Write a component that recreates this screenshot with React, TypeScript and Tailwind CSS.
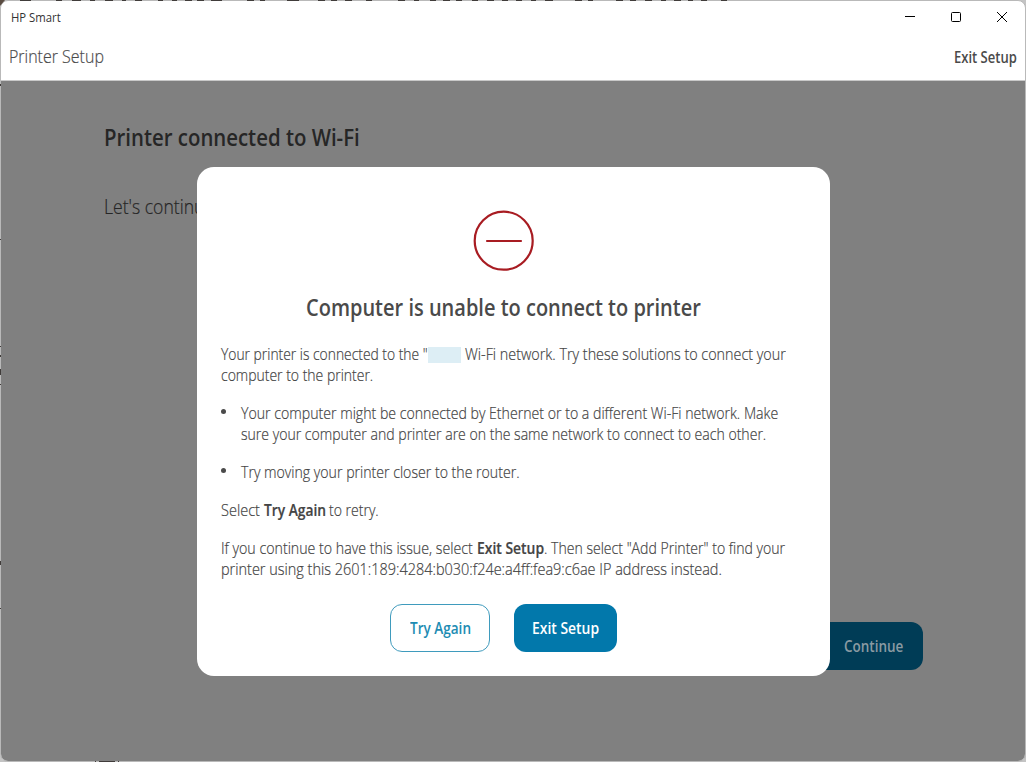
import { ReactNode, useLayoutEffect, useRef, useState } from 'react';

/** Keeps a run of text on one line and condenses it to the width of its box. */
function Fit({ className, children }: { className: string; children: ReactNode }) {
  const box = useRef<HTMLSpanElement>(null);
  const run = useRef<HTMLSpanElement>(null);
  const [scale, setScale] = useState(1);
  useLayoutEffect(() => {
    if (box.current && run.current) {
      setScale(box.current.offsetWidth / run.current.offsetWidth);
    }
  }, []);
  return (
    <span ref={box} className={`block shrink-0 whitespace-nowrap ${className}`}>
      <span ref={run} className="inline-block origin-left" style={{ transform: `scaleX(${scale})` }}>
        {children}
      </span>
    </span>
  );
}

function TitleBar() {
  return (
    <div className="flex h-8 items-center justify-between pl-[10px] text-[#333]">
      <Fit className="mt-px w-[50px] text-[12px] font-normal leading-4">HP Smart</Fit>
      <div className="flex text-black">
        <svg width="46" height="32" fill="none" stroke="currentColor">
          <path d="M18 15.5h10" />
        </svg>
        <svg width="46" height="32" fill="none" stroke="currentColor">
          <rect x="18.5" y="11.5" width="9" height="9" rx="1" />
        </svg>
        <svg width="46" height="32" fill="none" stroke="currentColor">
          <path d="M18 11l10 10M28 11L18 21" />
        </svg>
      </div>
    </div>
  );
}

/** Slivers of the document behind the window, seen along its edges. */
function Backdrop() {
  return (
    <svg className="pointer-events-none absolute inset-0" width="1026" height="762" fill="none" stroke="#403c3a">
      <path d="M0 0h5L0 6z" fill="#5a4c42" stroke="none" />
      <path d="M20 .5h11M56 .5h6M72 .5h9M90 .5h5M105 .5h8M122 .5h4M135 .5h7M158 .5h5M172 .5h5M185 .5h7M197 .5h7M211 .5h11M247 .5h7M260 .5h5M287 .5h12M318 .5h7M331 .5h6M345 .5h7M366 .5h6M398 .5h7M414 .5h5M430 .5h6M443 .5h7M456 .5h6M472 .5h6M487 .5h7M502 .5h6M516 .5h6M531 .5h5M545 .5h8M575 .5h7M588 .5h5M616 .5h7M630 .5h6M645 .5h7M661 .5h5M674 .5h7M688 .5h5M701 .5h6M721 .5h6" />
      <path d="M.5 239v1M.5 346v1M.5 355v2M.5 369v6M.5 384v1M.5 561v4M.5 608v1M.5 84v2M95 761.5h1M99 761.5h16M118 761.5h1" />
    </svg>
  );
}

function Dialog() {
  return (
    <section className="absolute left-[196px] top-[86px] flex h-[509px] w-[633px] flex-col rounded-[17px] bg-white px-6 pt-[43px] text-[16px] leading-[21px] text-[#444]">
      <svg className="ml-[252px] shrink-0" width="62" height="62" fill="none" stroke="#a81c22" strokeWidth="2.2">
        <circle cx="30.7" cy="30.7" r="29" />
        <path d="M14 31h34" strokeWidth="2.2" strokeLinecap="round" />
      </svg>
      <h2 className="ml-[85px] mt-[19px] text-[24px] font-semibold leading-8 text-[#4a4a4a]">
        <Fit className="w-[395px]">Computer is unable to connect to printer</Fit>
      </h2>
      <div className="mt-[21px] [-webkit-text-stroke:0.2px]">
        <div className="flex">
          <Fit className="w-[207px]">Your printer is connected to the "</Fit>
          <span className="mt-[3px] h-4 w-[33px] bg-[#ddeef5]" />
          <Fit className="ml-1 w-[321px]">Wi-Fi network. Try these solutions to connect your</Fit>
        </div>
        <Fit className="w-[152px]">computer to the printer.</Fit>
      </div>
      <ul className="mt-[17px] flex flex-col gap-[17px] [-webkit-text-stroke:0.2px]">
        <li className="flex">
          <span className="mr-[15px] mt-[6px] size-[5px] rounded-full bg-[#4a4a4a]" />
          <div>
            <Fit className="w-[537px]">Your computer might be connected by Ethernet or to a different Wi-Fi network. Make</Fit>
            <Fit className="w-[525px]">sure your computer and printer are on the same network to connect to each other.</Fit>
          </div>
        </li>
        <li className="flex">
          <span className="mr-[15px] mt-[6px] size-[5px] rounded-full bg-[#4a4a4a]" />
          <Fit className="w-[279px]">Try moving your printer closer to the router.</Fit>
        </li>
      </ul>
      <div className="mt-[17px] flex [-webkit-text-stroke:0.2px]">
        <Fit className="w-[39px]">Select</Fit>
        <Fit className="ml-1 w-[62px] font-semibold">Try Again</Fit>
        <Fit className="ml-[3px] w-[50px]">to retry.</Fit>
      </div>
      <div className="mt-[17px] [-webkit-text-stroke:0.2px]">
        <div className="flex">
          <Fit className="w-[252px]">If you continue to have this issue, select</Fit>
          <Fit className="ml-1 w-[67px] font-semibold">Exit Setup</Fit>
          <Fit className="w-[241px]">. Then select "Add Printer" to find your</Fit>
        </div>
        <Fit className="w-[501px]">printer using this 2601:189:4284:b030:f24e:a4ff:fea9:c6ae IP address instead.</Fit>
      </div>
      <div className="ml-[169px] mt-6 flex gap-6 font-semibold">
        <button className="flex h-12 w-[100px] items-center justify-center rounded-xl border border-[#3f9bbd] text-[#1d8cb3]">
          <Fit className="w-[61px]">Try Again</Fit>
        </button>
        <button className="flex h-12 w-[103px] items-center justify-center rounded-xl bg-[#0278ab] text-white">
          <Fit className="w-[67px]">Exit Setup</Fit>
        </button>
      </div>
    </section>
  );
}

export default function App() {
  return (
    <div className="relative h-[762px] w-[1026px] bg-[#c4c4c4] font-['Open_Sans','Noto_Sans',sans-serif] font-light">
      <div className="flex h-full flex-col overflow-hidden rounded-lg border border-[#b9b9b9] bg-white">
        <TitleBar />
        <header className="flex h-12 items-start justify-between border-b border-[#c9c9c9] px-2 text-[#4a4a4a]">
          <Fit className="mt-[9px] w-[95px] text-[18px] leading-7 [-webkit-text-stroke:0.2px]">Printer Setup</Fit>
          <Fit className="mt-[14px] w-[63px] text-[15.5px] font-semibold leading-[21px]">Exit Setup</Fit>
        </header>
        <main className="relative flex-1 bg-[#808080] pl-[103px] pt-10 text-[#262626]">
          <h1 className="text-[23px] font-semibold leading-8">
            <Fit className="w-[256px]">Printer connected to Wi-Fi</Fit>
          </h1>
          <Fit className="mt-[40px] w-[110px] text-[20px] leading-7 [-webkit-text-stroke:0.2px]">Let's continue</Fit>
          <button className="ml-[691px] mt-[401px] flex h-12 w-[128px] items-center justify-end rounded-xl bg-[#003c56] pr-[20px] text-[16px] font-semibold text-[#8a9aa2]">
            <Fit className="w-[59px]">Continue</Fit>
          </button>
          <Dialog />
        </main>
      </div>
      <Backdrop />
    </div>
  );
}
